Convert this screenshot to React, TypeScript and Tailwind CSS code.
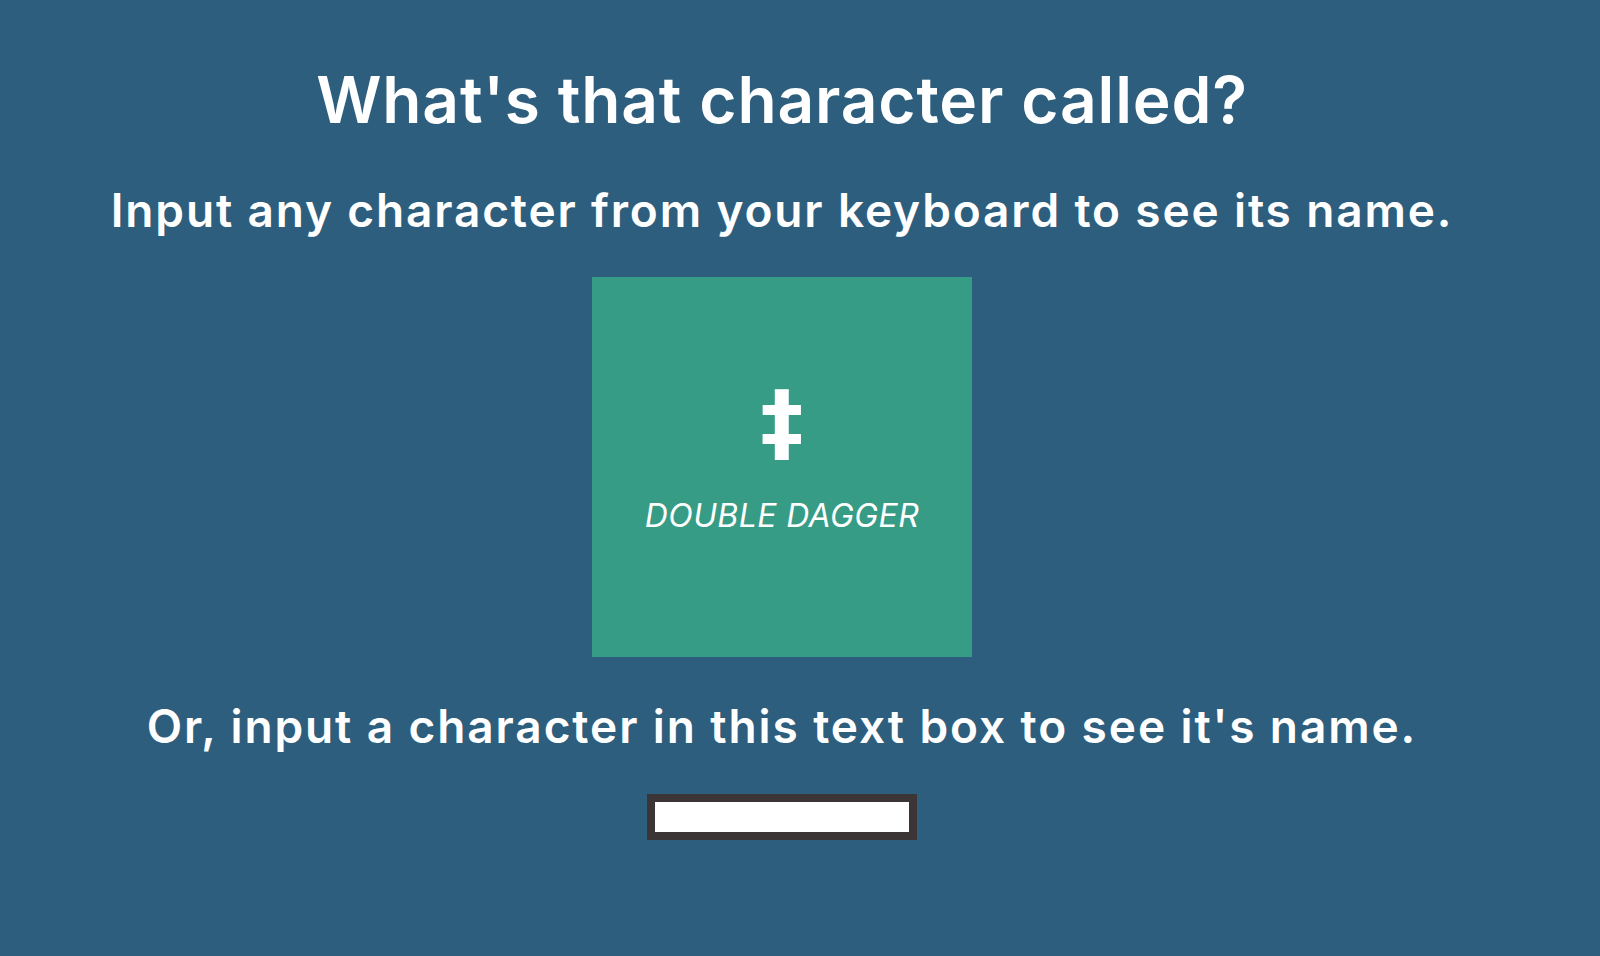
export default function App() {
  return (
    <div className="min-h-screen w-full bg-[#2d5e7d] font-['Inter',sans-serif] text-white">
      <div className="flex w-[1564px] flex-col items-center text-center">
        <h1 className="mt-[62px] text-[64px] font-semibold leading-[76px] tracking-[0.85px]">
          What's that character called?
        </h1>
        <p className="mt-[44px] text-[46px] font-semibold leading-[56px] tracking-[1.85px]">
          Input any character from your keyboard to see its name.
        </p>
        <div className="mt-[39px] flex h-[380px] w-[380px] flex-col items-center bg-[#369c85] pt-[97px]">
          <div className="h-[96px] font-['DejaVu_Sans',sans-serif] text-[86px] font-bold leading-[96px]">‡</div>
          <div className="mt-[30px] text-[32px] italic leading-none tracking-[0.4px]">DOUBLE DAGGER</div>
        </div>
        <p className="mt-[41px] text-[46px] font-semibold leading-[56px] tracking-[1.9px]">
          Or, input a character in this text box to see it's name.
        </p>
        <input
          type="text"
          className="mt-[40px] h-[46px] w-[270px] border-[8px] border-[#3b3536] bg-white outline-none"
        />
      </div>
    </div>
  );
}
